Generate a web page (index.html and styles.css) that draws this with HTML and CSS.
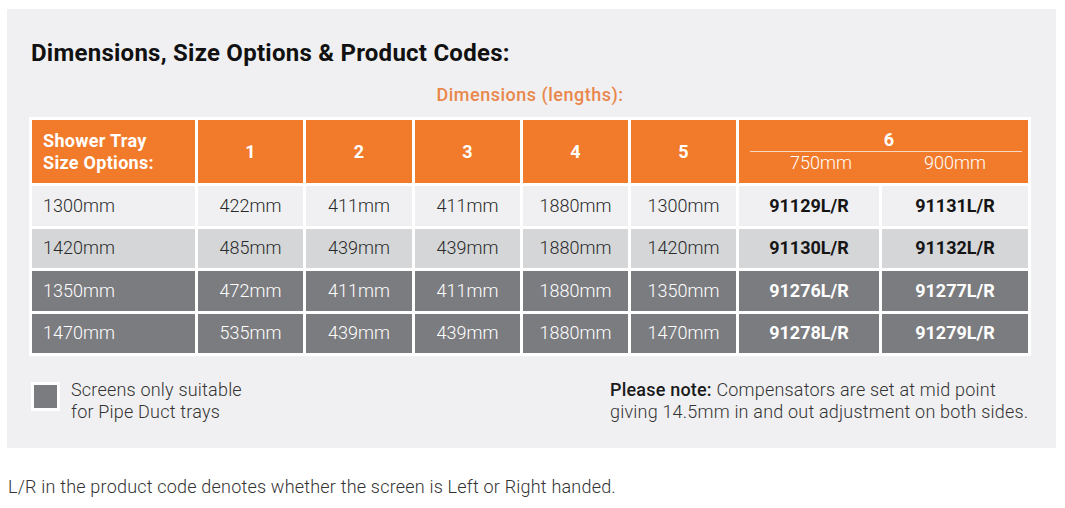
FILE: index.html
```html
<!DOCTYPE html>
<html lang="en">
<head>
<meta charset="utf-8">
<title>Dimensions, Size Options &amp; Product Codes</title>
<link rel="stylesheet" href="styles.css">
</head>
<body>
<div class="panel">
  <h2 class="title">Dimensions, Size Options &amp; Product Codes:</h2>
  <div class="subtitle">Dimensions (lengths):</div>
  <table class="dims">
    <colgroup>
      <col class="c0"><col class="c1"><col class="c2"><col class="c3"><col class="c4"><col class="c5"><col class="c6a"><col class="c6b">
    </colgroup>
    <thead>
      <tr>
        <th class="first">Shower Tray<br>Size Options:</th>
        <th>1</th><th>2</th><th>3</th><th>4</th><th>5</th>
        <th colspan="2" class="six">
          <div class="six-num">6</div>
          <div class="six-sub"><span>750mm</span><span>900mm</span></div>
        </th>
      </tr>
    </thead>
    <tbody>
      <tr class="light">
        <td class="first">1300mm</td><td>422mm</td><td>411mm</td><td>411mm</td><td>1880mm</td><td>1300mm</td><td class="code">91129L/R</td><td class="code">91131L/R</td>
      </tr>
      <tr class="mid">
        <td class="first">1420mm</td><td>485mm</td><td>439mm</td><td>439mm</td><td>1880mm</td><td>1420mm</td><td class="code">91130L/R</td><td class="code">91132L/R</td>
      </tr>
      <tr class="dark">
        <td class="first">1350mm</td><td>472mm</td><td>411mm</td><td>411mm</td><td>1880mm</td><td>1350mm</td><td class="code">91276L/R</td><td class="code">91277L/R</td>
      </tr>
      <tr class="dark">
        <td class="first">1470mm</td><td>535mm</td><td>439mm</td><td>439mm</td><td>1880mm</td><td>1470mm</td><td class="code">91278L/R</td><td class="code">91279L/R</td>
      </tr>
    </tbody>
  </table>
  <div class="notes">
    <div class="legend">
      <span class="swatch"></span>
      <span class="legend-text">Screens only suitable<br>for Pipe Duct trays</span>
    </div>
    <div class="note"><strong>Please note:</strong> Compensators are set at mid point<br>giving 14.5mm in and out adjustment on both sides.</div>
  </div>
</div>
<p class="footer">L/R in the product code denotes whether the screen is Left or Right handed.</p>
</body>
</html>
```

FILE: styles.css
```css
html, body {
  margin: 0;
  padding: 0;
  background: #ffffff;
}
body {
  font-family: Roboto, "Liberation Sans", sans-serif;
  color: #333333;
}
.panel {
  margin: 9px 0 0 7px;
  width: 1049px;
  box-sizing: border-box;
  background: #f0f0f2;
  padding: 30px 0 25px 22px;
}
.title {
  margin: 0 0 17px 2px;
  font-size: 24px;
  letter-spacing: 0.25px;
  line-height: 28px;
  font-weight: 700;
  color: #111111;
}
.subtitle {
  width: 1002px;
  text-align: center;
  font-size: 18px;
  letter-spacing: 0.5px;
  line-height: 22px;
  font-weight: 500;
  color: #e9874b;
  margin-bottom: 11px;
}
.dims {
  width: 1002px;
  table-layout: fixed;
  border-collapse: separate;
  border-spacing: 3px;
  background: #ffffff;
  font-size: 18px;
}
.c0 { width: 163px; }
.c1 { width: 105px; }
.c2 { width: 106px; }
.c3 { width: 105px; }
.c4 { width: 105px; }
.c5 { width: 105px; }
.c6a { width: 140px; }
.c6b { width: 146px; }
.dims th {
  background: #f27b2b;
  color: #ffffff;
  height: 63px;
  padding: 0;
  font-weight: 700;
  letter-spacing: 0.3px;
  line-height: 22px;
  text-align: center;
  vertical-align: middle;
}
.dims th.first {
  text-align: left;
  padding-left: 11px;
}
.dims th.six {
  padding: 0 6px 0 11px;
}
.six-num {
  padding-left: 6px;
  line-height: 22px;
  border-bottom: 1px solid #f7d9c4;
}
.six-sub {
  display: grid;
  grid-template-columns: 1fr 1fr;
  padding-left: 4px;
  font-weight: 300;
  letter-spacing: 0;
  line-height: 22px;
}
.dims td {
  height: 39.5px;
  padding: 0;
  text-align: center;
  vertical-align: middle;
  font-weight: 300;
  line-height: 22px;
}
.dims td.first {
  text-align: left;
  padding-left: 11px;
}
.dims td.code {
  font-weight: 700;
}
.light td { background: #f0f0f2; color: #2a2a2a; }
.light td.code, .mid td.code { color: #151515; }
.mid td { background: #d5d6d8; color: #2a2a2a; }
.dark td { background: #7b7c7f; color: #ffffff; }
.notes {
  display: flex;
  margin-top: 23px;
  width: 1002px;
  font-size: 18px;
  font-weight: 300;
  letter-spacing: 0.2px;
  line-height: 22px;
  color: #333333;
}
.legend {
  display: flex;
  align-items: flex-start;
  margin-left: 2px;
}
.swatch {
  width: 23px;
  height: 23px;
  background: #7b7c7f;
  border: 3px solid #ffffff;
  margin-top: 3px;
  margin-right: 11px;
}
.note {
  margin-left: auto;
  width: 421px;
}
.note strong {
  font-weight: 500;
  color: #1a1a1a;
}
.footer {
  margin: 28px 0 0 8px;
  font-size: 18px;
  font-weight: 300;
  letter-spacing: 0.2px;
  line-height: 22px;
  color: #333333;
}
```
